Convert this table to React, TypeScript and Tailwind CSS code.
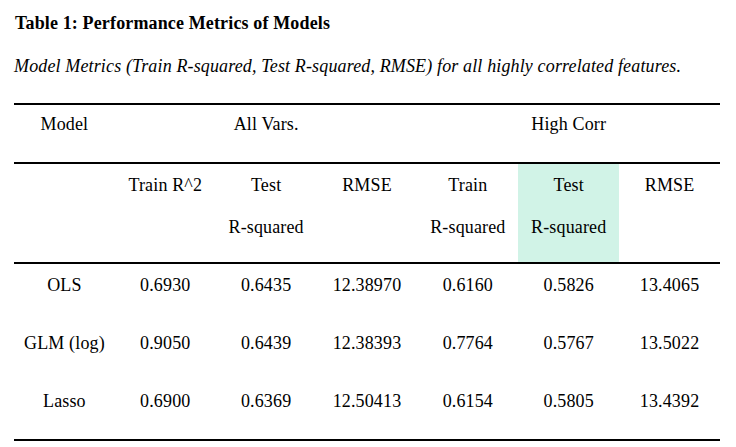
import React from "react";

function Cell({ children, green = false }: { children?: React.ReactNode; green?: boolean }) {
  return (
    <div className={`text-center leading-[42.4px] ${green ? "bg-[#d1f3e7]" : ""}`}>
      {children}
    </div>
  );
}

const rows = [
  ["OLS", "0.6930", "0.6435", "12.38970", "0.6160", "0.5826", "13.4065"],
  ["GLM (log)", "0.9050", "0.6439", "12.38393", "0.7764", "0.5767", "13.5022"],
  ["Lasso", "0.6900", "0.6369", "12.50413", "0.6154", "0.5805", "13.4392"],
];

export default function App() {
  return (
    <div className="font-['Liberation_Serif',serif] tracking-[0.14px] w-[736px] h-[447px] bg-white text-black text-[18px] pl-[14px] pt-[13px] overflow-hidden">
      <div className="font-bold leading-[20px] pl-px">Table 1: Performance Metrics of Models</div>
      <div className="italic leading-[20px] mt-[23px]">
        Model Metrics (Train R-squared, Test R-squared, RMSE) for all highly correlated features.
      </div>
      <div className="w-[706px] mt-[27px] border-t-2 border-b-2 border-black">
        <div className="grid grid-cols-7 h-[59px] border-b-2 border-black">
          <div className="text-center leading-[38px]">Model</div>
          <div className="col-span-3 text-center leading-[38px]">All Vars.</div>
          <div className="col-span-3 text-center leading-[38px]">High Corr</div>
        </div>
        <div className="grid grid-cols-7 h-[100px] border-b-2 border-black">
          <Cell />
          <Cell>Train R^2</Cell>
          <Cell>
            Test
            <br />
            R-squared
          </Cell>
          <Cell>RMSE</Cell>
          <Cell>
            Train
            <br />
            R-squared
          </Cell>
          <Cell green>
            Test
            <br />
            R-squared
          </Cell>
          <Cell>RMSE</Cell>
        </div>
        {rows.map((r, i) => (
          <div key={i} className={`grid grid-cols-7 ${i === 2 ? "h-[59px]" : "h-[58px]"}`}>
            {r.map((v, j) => (
              <Cell key={j}>{v}</Cell>
            ))}
          </div>
        ))}
      </div>
    </div>
  );
}
